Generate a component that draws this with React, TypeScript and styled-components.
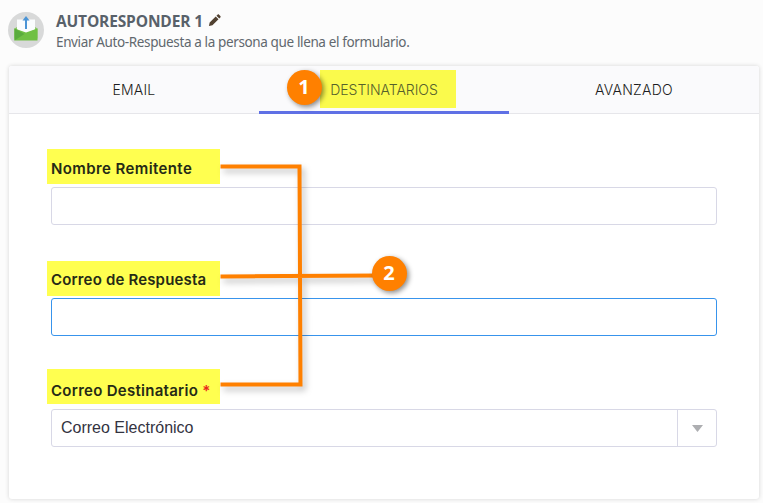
import React from "react";
import styled, { createGlobalStyle } from "styled-components";

const GlobalStyle = createGlobalStyle`
  * { box-sizing: border-box; }
  body { margin: 0; background: #fcfcfc; overflow: hidden; }
`;

const Page = styled.main`
  position: relative;
  width: 763px;
  height: 503px;
  padding: 12px 4px 4px 9px;
  overflow: hidden;
  background: #fcfcfc;
  font-family: "Liberation Sans", Arial, sans-serif;
`;

const Header = styled.header`
  display: flex;
  gap: 12px;
  height: 54px;
  margin-left: -1px;
`;

const MailIcon = styled.svg`
  width: 36px;
  height: 36px;
  flex: none;
`;

const HeaderText = styled.div`
  display: flex;
  flex-direction: column;
  white-space: nowrap;
`;

const TitleRow = styled.div`
  display: flex;
  align-items: flex-start;
  gap: 5px;
  height: 20px;
`;

const Title = styled.h1`
  margin: 0;
  font: 700 15.5px/18px "Open Sans", sans-serif;
  letter-spacing: -0.15px;
  color: #58616a;
`;

const Pencil = styled.svg`
  width: 13px;
  height: 13px;
  margin-top: 2px;
`;

const Subtitle = styled.p`
  margin: 0;
  font: 400 13.5px/21px "Noto Sans", sans-serif;
  letter-spacing: -0.37px;
  color: #61686e;
`;

const Card = styled.section`
  width: 750px;
  height: 433px;
  border-radius: 3px;
  background: #fff;
  box-shadow: 0 0 4px rgba(0, 0, 0, 0.16);
`;

const Tabs = styled.nav`
  display: grid;
  grid-template-columns: repeat(3, 1fr);
  height: 48px;
  border-bottom: 1px solid #e6e6ea;
  border-radius: 3px 3px 0 0;
  background: #fafafc;
`;

const Tab = styled.button<{ $active?: boolean }>`
  height: 48px;
  padding: 0;
  border: 0;
  border-bottom: 3px solid ${(p) => (p.$active ? "#5f70e5" : "transparent")};
  background: transparent;
  font: 300 14px/45px Inter, sans-serif;
  color: ${(p) => (p.$active ? "#55602c" : "#1c1c20")};
`;

const TabLabel = styled.span<{ $spacing: number }>`
  position: relative;
  z-index: 1;
  top: 1px;
  letter-spacing: ${(p) => p.$spacing}px;
`;

const TabMark = styled.span`
  position: relative;
  display: inline-block;
  &::before {
    content: "";
    position: absolute;
    left: -10px;
    top: 4px;
    width: 136px;
    height: 38px;
    background: #fafa4c;
  }
`;

const Form = styled.form`
  display: flex;
  flex-direction: column;
  padding: 44px 42px 0;
`;

const Field = styled.div`
  height: 111px;
`;

const Label = styled.label<{ $top: number; $spacing: number }>`
  position: relative;
  display: block;
  height: 29px;
  font: 600 15px/22px Inter, sans-serif;
  letter-spacing: ${(p) => p.$spacing}px;
  color: #252a16;
  &::before {
    content: "";
    position: absolute;
    left: -4px;
    top: ${(p) => p.$top}px;
    width: 173px;
    height: 35px;
    background: #ffff50;
  }
`;

const LabelText = styled.span`
  position: relative;
`;

const Required = styled.span`
  color: #e8261c;
`;

const Input = styled.input<{ $focus?: boolean }>`
  display: block;
  position: relative;
  width: 666px;
  height: 38px;
  padding: 0 9px;
  border: 1px solid ${(p) => (p.$focus ? "#3894ec" : "#d8d8e6")};
  border-radius: 3px;
  outline: 0;
  background: #fff;
`;

const Select = styled.div`
  display: grid;
  grid-template-columns: 1fr 39px;
  width: 666px;
  height: 38px;
  border: 1px solid #d8d8e6;
  border-radius: 3px;
  background: #fff;
`;

const SelectValue = styled.span`
  padding-left: 9px;
  font-size: 16px;
  line-height: 36px;
  color: #33333f;
`;

const SelectArrow = styled.span`
  display: grid;
  place-items: center;
  border-left: 1px solid #d8d8e6;
`;

const Connectors = styled.svg`
  position: absolute;
  left: 0;
  top: 0;
  width: 763px;
  height: 503px;
  pointer-events: none;
  filter: drop-shadow(3px 4px 3px rgba(0, 0, 0, 0.25));
`;

const Badge = styled.span<{ $x: number; $y: number }>`
  position: absolute;
  z-index: 2;
  left: ${(p) => p.$x}px;
  top: ${(p) => p.$y}px;
  width: 35px;
  height: 35px;
  border-radius: 50%;
  background: #ff8000;
  box-shadow: 2px 2px 5px rgba(0, 0, 0, 0.45);
  color: #fff;
  font: 700 20px/34px "Noto Sans", sans-serif;
  text-align: center;
`;

export default function App() {
  return (
    <>
      <GlobalStyle />
      <Page>
        <Header>
          <MailIcon viewBox="0 0 36 36">
            <circle cx="18" cy="18" r="18" fill="#d8d9d9" />
            <path d="M6.5 16.5 9 15h18l2.5 1.5v10h-23z" fill="#8fca6c" />
            <path d="M9 7.5h18v10l-9 4-9-4z" fill="#fafcfd" />
            <path d="m6.5 16.5 11.5 4 11.5-4v12h-23z" fill="#70c044" />
            <path d="m6.5 16.5 10 5.5-10 6.5z" fill="#5aac3d" />
            <path d="M18 17V6" fill="none" stroke="#4b94d5" strokeWidth="2" />
            <path d="m14.5 8.5 3.5-4.5 3.5 4.5z" fill="#4b94d5" />
          </MailIcon>
          <HeaderText>
            <TitleRow>
              <Title>AUTORESPONDER 1</Title>
              <Pencil viewBox="0 0 14 14">
                <path d="m1 13 .8-3.8 6.5-6.5 3 3-6.5 6.500zM9.1 1.900l1.200-1.200c.5-.5 1.100-.5 1.600 0l1.400 1.400c.5.5.5 1.100 0 1.600l-1.200 1.200z" fill="#514131" />
              </Pencil>
            </TitleRow>
            <Subtitle>Enviar Auto-Respuesta a la persona que llena el formulario.</Subtitle>
          </HeaderText>
        </Header>
        <Card>
          <Tabs>
            <Tab><TabLabel $spacing={0.2}>EMAIL</TabLabel></Tab>
            <Tab $active>
              <TabMark><TabLabel $spacing={-0.03}>DESTINATARIOS</TabLabel></TabMark>
            </Tab>
            <Tab><TabLabel $spacing={0.25}>AVANZADO</TabLabel></Tab>
          </Tabs>
          <Form>
            <Field>
              <Label $top={-9} $spacing={0.4}><LabelText>Nombre Remitente</LabelText></Label>
              <Input />
            </Field>
            <Field>
              <Label $top={-8} $spacing={0.17}><LabelText>Correo de Respuesta</LabelText></Label>
              <Input $focus />
            </Field>
            <Field>
              <Label $top={-11} $spacing={0.28}>
                <LabelText>Correo Destinatario <Required>*</Required></LabelText>
              </Label>
              <Select>
                <SelectValue>Correo Electrónico</SelectValue>
                <SelectArrow>
                  <svg width="11" height="7" viewBox="0 0 11 7"><path d="M0 0h11L5.5 7z" fill="#adaeb1" /></svg>
                </SelectArrow>
              </Select>
            </Field>
          </Form>
        </Card>
        <Connectors viewBox="0 0 763 503">
          <path d="M220.5 166.5H299.5L300.5 384.5H220.5M220.5 276.5 378 275.5" fill="none" stroke="#ff8000" strokeWidth="4" />
        </Connectors>
        <Badge $x={286.5} $y={70}>1</Badge>
        <Badge $x={371.5} $y={255.5}>2</Badge>
      </Page>
    </>
  );
}
